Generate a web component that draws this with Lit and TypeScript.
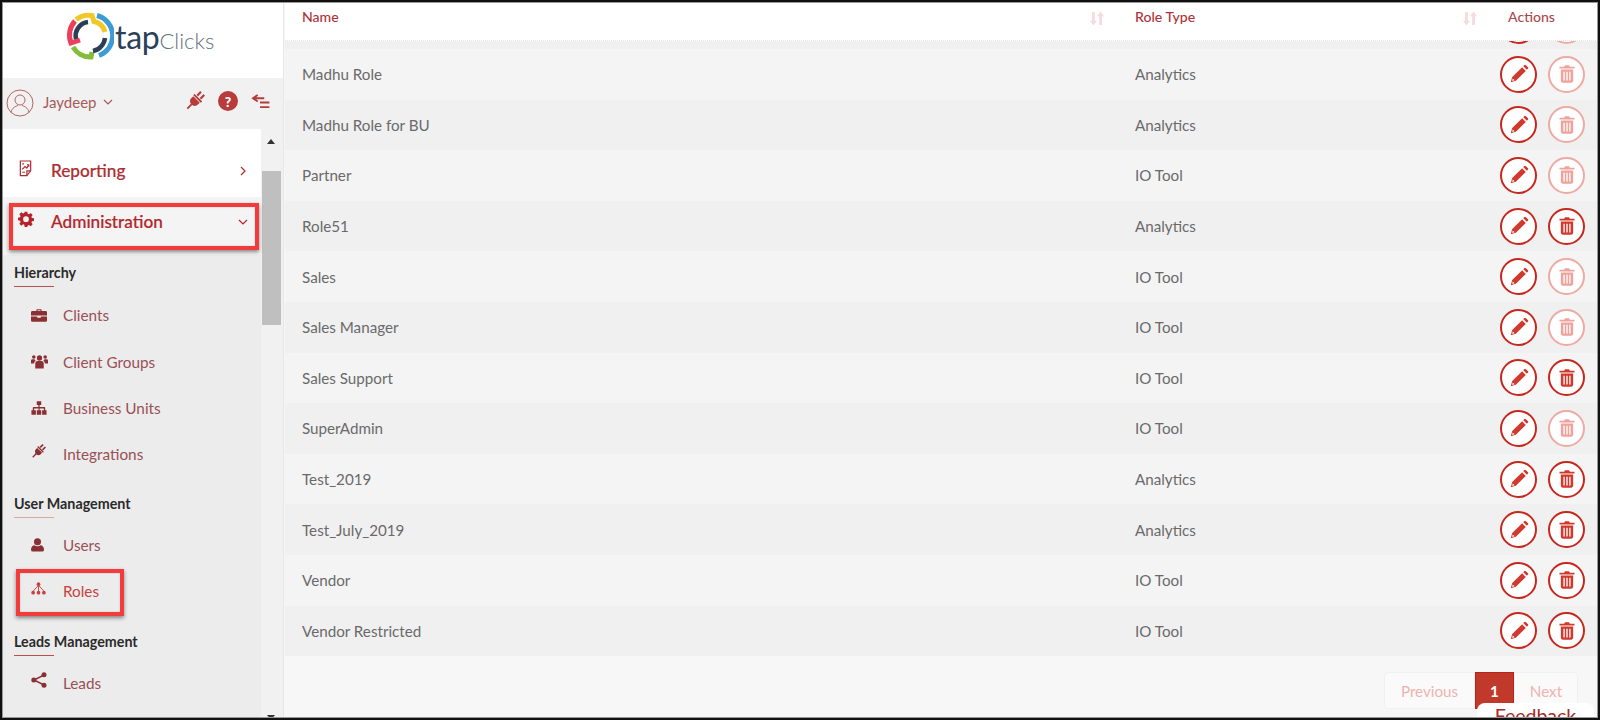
import { LitElement, html, css, svg } from "lit";
import { customElement } from "lit/decorators.js";

const pencil = svg`<svg viewBox="0 0 24 24" width="22" height="22" class="ic"><path d="M3 21l1.600-5.600L15.400 4.600l4 4L8.600 19.400z"/><path d="M16.600 3.400l1-1a1.400 1.400 0 0 1 2 0l2 2a1.400 1.400 0 0 1 0 2l-1 1z"/><path d="M5.100 16.800l2.100 2.100-2.600.6z" fill="#fff"/></svg>`;
const trash = svg`<svg viewBox="0 0 24 24" width="20" height="20" class="ic"><path d="M8.500 3.400 9.600 1.600h4.800l1.100 1.800H21v2H3v-2z"/><path fill-rule="evenodd" d="M4.600 6.600h14.800v13.600a2.200 2.200 0 0 1-2.200 2.200H6.800a2.200 2.200 0 0 1-2.200-2.200zM7.700 9.200v10.600h1.600V9.200zm3.500 0v10.600h1.600V9.200zm3.500 0v10.600h1.600V9.200z"/></svg>`;
const sortI = svg`<svg viewBox="0 0 16 16" width="14" height="15" preserveAspectRatio="none" class="sort"><path d="M2.300 1h3.200v9.500H8L3.900 15.500 0 10.500h2.300zM10.500 5.500H8L12 .5l4 5h-2.300V15h-3.200z"/></svg>`;
const gear = svg`<svg viewBox="0 0 24 24" width="16" height="16" fill="currentColor"><path fill-rule="evenodd" d="M10 1h4l.6 3.100 1.800.8L19.100 3l2.900 2.900-1.900 2.700.8 1.800L24 11v4l-3.100.5-.8 1.800 1.900 2.700-2.900 2.900-2.700-1.900-1.800.8L14 24h-4l-.6-3.200-1.800-.8L4.900 22 2 19.100l1.900-2.700-.8-1.800L0 14v-4l3.100-.6.8-1.800L2 4.900 4.900 2l2.700 1.900 1.800-.8zM12 8a4.300 4.300 0 1 0 0 8.600A4.300 4.300 0 0 0 12 8z"/></svg>`;
const report = svg`<svg viewBox="0 0 16 18" width="15" height="17" fill="none" stroke="currentColor" stroke-width="1.300"><path d="M2.500 1h11v10.500L9.500 16.500h-7z"/><path d="M13.500 11.500h-4v5"/><path d="M4.500 10l3-3 2 1.500 2-3.500M9.500 5h2v2M4.500 4h2M4.500 13h3"/></svg>`;
const brief = svg`<svg viewBox="0 0 18 14" width="16" height="13" fill="currentColor"><path fill-rule="evenodd" d="M6 2V1a1 1 0 0 1 1-1h4a1 1 0 0 1 1 1v1h4.500A1.500 1.500 0 0 1 18 3.500V7H0V3.500A1.500 1.500 0 0 1 1.500 2zm1.300 0h3.400V1.200H7.300z"/><path d="M0 8h7v1.500h4V8h7v4.500a1.500 1.500 0 0 1-1.500 1.500h-15A1.500 1.500 0 0 1 0 12.500z"/></svg>`;
const users = svg`<svg viewBox="0 0 18 15" width="17" height="15" fill="currentColor"><circle cx="9" cy="3.800" r="2.800"/><circle cx="3" cy="2.800" r="1.900"/><circle cx="15" cy="2.800" r="1.900"/><path d="M4.500 9.500a2.500 2.500 0 0 1 2.500-2.500h4a2.500 2.500 0 0 1 2.500 2.500V15h-9zM0 6.500a1.500 1.500 0 0 1 1.500-1.500h2.300c.3 1 .8 1.500 1.200 1.700C4 7.200 3.400 8.200 3.400 9.500H0zM18 6.500A1.500 1.500 0 0 0 16.500 5h-2.300c-.3 1-.8 1.500-1.200 1.700 1 .5 1.600 1.500 1.600 2.800H18z"/></svg>`;
const sitemap = svg`<svg viewBox="0 0 18 15" width="16" height="14" fill="currentColor"><path d="M6.500 0h5v4H9.700v2.500H15a1 1 0 0 1 1 1V10h1.500v5h-5v-5h2V8H9.700v2h1.800v5h-5v-5h2V8H3.500v2h2v5H.5v-5H2V7.500a1 1 0 0 1 1-1h5.300V4H6.500z"/></svg>`;
const plug = svg`<svg viewBox="0 0 24 24" width="100%" height="100%" fill="currentColor"><g transform="rotate(45 12 12)"><rect x="8" y="-1" width="2.600" height="6.500" rx=".6"/><rect x="13.400" y="-1" width="2.600" height="6.500" rx=".6"/><rect x="5.500" y="6.300" width="13" height="2.200" rx=".6"/><path d="M6.500 9.400h11v3.100a5.500 5.500 0 0 1-4.400 5.400V25h-2.200v-7.100a5.500 5.500 0 0 1-4.400-5.400z"/></g></svg>`;
const person = svg`<svg viewBox="0 0 14 15" width="13" height="14" fill="currentColor"><circle cx="7" cy="4" r="3.800"/><path d="M0 12.500C0 9.500 2 7.800 3.500 7.800 4.500 8.500 5.600 8.900 7 8.900s2.500-.4 3.500-1.100C12 7.800 14 9.500 14 12.500a2 2 0 0 1-2 2H2a2 2 0 0 1-2-2z"/></svg>`;
const roleI = svg`<svg viewBox="0 0 16 14" width="15" height="13" fill="none" stroke="currentColor" stroke-width="1"><path d="M8 3v8M8 3.500 2.500 9.500v2M8 3.500l5.500 6v2"/><g fill="currentColor" stroke="none"><circle cx="8" cy="2.300" r="2"/><circle cx="2.200" cy="11.500" r="2"/><circle cx="8" cy="11.500" r="2"/><circle cx="13.800" cy="11.500" r="2"/></g></svg>`;
const share = svg`<svg viewBox="0 0 16 16" width="16" height="16" fill="currentColor" stroke="currentColor"><path d="M13 3 3 8l10 5" fill="none" stroke-width="1.400"/><g stroke="none"><circle cx="13" cy="2.800" r="2.500"/><circle cx="2.800" cy="8" r="2.500"/><circle cx="13" cy="13.200" r="2.500"/></g></svg>`;

const rows: [string, string, boolean][] = [
  ["Madhu Role", "Analytics", false],
  ["Madhu Role for BU", "Analytics", false],
  ["Partner", "IO Tool", false],
  ["Role51", "Analytics", true],
  ["Sales", "IO Tool", false],
  ["Sales Manager", "IO Tool", false],
  ["Sales Support", "IO Tool", true],
  ["SuperAdmin", "IO Tool", false],
  ["Test_2019", "Analytics", true],
  ["Test_July_2019", "Analytics", true],
  ["Vendor", "IO Tool", true],
  ["Vendor Restricted", "IO Tool", true],
];

@customElement("app-root")
export class AppRoot extends LitElement {
  static styles = css`
    :host { display: block; width: 1600px; height: 720px; position: relative; overflow: hidden; background: #f7f7f7;
      font-family: Lato, "Liberation Sans", sans-serif; color: #666; box-sizing: border-box; }
    * { box-sizing: border-box; }
    .frame { position: absolute; inset: 0; border: 2px solid #111; box-shadow: inset 0 0 0 1px #999; pointer-events: none; z-index: 5; }
    .shell { display: flex; height: 720px; padding: 3px 0 0 2px; }
    .side { width: 282px; flex: none; display: flex; flex-direction: column; background: #ececec; border-right: 1px solid #e6e6e6; }
    .logo { height: 75px; background: #fff; display: flex; align-items: flex-start; gap: 1px; padding: 9px 0 0 64px; }
    .logo-t { margin-top: 9px; line-height: 1; font-size: 22px; font-weight: 300; color: #5f7281; white-space: nowrap; }
    .logo-t b { font-size: 32px; font-weight: 400; color: #2a4158; letter-spacing: -0.3px; }
    .user { height: 51px; background: #f1f1f1; display: flex; align-items: center; padding: 0 13px 0 4px; color: #a85a5a; font-size: 15px; }
    .user > span, .chev { margin-bottom: 4px; }
    .avatar { width: 28px; height: 28px; margin: 0 9px 2px 0; }
    .chev { margin-left: 7px; }
    .tools { margin: 0 0 5px auto; display: flex; align-items: center; gap: 13px; color: #b83a3a; }
    .tools .pl { width: 20px; height: 20px; }
    .help { width: 20px; height: 20px; border-radius: 50%; background: #b83c3c; color: #fff; font-weight: 900; font-size: 14px; display: flex; align-items: center; justify-content: center; }
    .body { flex: 1; display: flex; min-height: 0; }
    .nav { width: 259px; flex: none; display: flex; flex-direction: column; }
    .top { height: 68px; background: #fff; display: flex; align-items: flex-end; padding: 0 15px 15px 16px; color: #ad2f33; }
    .admin { height: 58px; background: #f4f4f4; display: flex; align-items: flex-start; padding: 14px 13px 0 16px; color: #b5242a; }
    .top span, .admin span { font-size: 17.200px; font-weight: 500; margin-left: 17px; flex: 1; line-height: 22px; -webkit-text-stroke: 0.2px currentColor; }
    .top span { margin-left: 18px; }
    .top svg:first-child, .admin svg:first-child { flex: none; }
    .top svg:first-child { margin-bottom: 5px; }
    .tchev { margin-bottom: 6px; }
    .achev { margin-top: 8px; }
    .sub { flex: 1; padding: 6px 0 0 12px; }
    .sec { font-size: 14.300px; font-weight: 700; color: #2a2a2a; height: 25px; line-height: 24px; white-space: nowrap; }
    .rule { width: 40px; height: 1px; background: #b85050; margin-bottom: 5px; margin-left: 0; }
    .rule.l { background: #d9a5a5; margin-bottom: 4px; }
    .rule.t { margin-bottom: 3px; }
    .it { height: 46.400px; display: flex; align-items: center; color: #9a5055; font-size: 15.300px; padding-left: 16px; }
    .it .i { width: 33px; flex: none; display: flex; justify-content: flex-start; color: #8a2f33; padding-left: 1px; }
    .it .i.raise { margin-top: -6px; }
    .it.on, .it.on .i { color: #c8403f; }
    .it .pi { width: 15px; height: 15px; display: block; }
    .gap { height: 14px; }
    .gap2 { height: 16px; }
    .bar { width: 22px; flex: none; background: #f1f1f1; position: relative; }
    .thumb { position: absolute; left: 1px; right: 2px; top: 42px; height: 154px; background: #bfbfbf; }
    .up, .dn { position: absolute; left: 6px; width: 0; height: 0; border-left: 4px solid transparent; border-right: 4px solid transparent; }
    .up { top: 10px; border-bottom: 5px solid #333; }
    .dn { bottom: 0; border-top: 5px solid #333; }
    .main { flex: 1; min-width: 0; display: flex; flex-direction: column; background: #f7f7f7; padding-left: 1px; }
    .head, .row { display: grid; grid-template-columns: 833px 370px 1fr; padding-left: 17px; align-items: center; }
    .head { height: 38px; background: #fff; font-size: 14.100px; color: #ae3338; align-items: start; padding-top: 5px; border-bottom: 1px dotted #e6e6e6; position: relative; z-index: 1; }
    .hc { display: flex; justify-content: space-between; padding-right: 31px; font-weight: 500; }
    .hc.b { padding-right: 28px; }
    .hc.a { color: #a9494d; padding-left: 3px; }
    .sort { fill: #f5dcdc; margin-top: 3px; }
    .row { height: 50.600px; font-size: 15.200px; color: #6a6a6a; background: #f4f4f4; }
    .row:nth-child(even) { background: #f0f0f0; }
    .peek { height: 8px; overflow: hidden; background: #f0f0f0; align-items: start; }
    .peek .acts { margin-top: -34px; grid-column: 3; }
    .acts { display: flex; gap: 11px; margin-left: -5px; justify-content: flex-start; }
    .btn { width: 37px; height: 37px; border-radius: 50%; border: 2px solid #c6281d; background: #fff; display: flex; align-items: center; justify-content: center; fill: #d03a2e; }
    .btn.off { border-color: #eeaaa4; fill: #eea39c; }
    .pager { margin: 16px 22px 0 auto; height: 37px; display: flex; font-size: 15.200px; }
    .pg { border: 1px solid #f1f1f1; background: #fafafa; color: #eeb3ae; display: flex; align-items: center; justify-content: center; }
    .pg.p { width: 91px; border-radius: 4px 0 0 4px; }
    .pg.n { width: 64px; border-radius: 0 4px 4px 0; }
    .pg.c { width: 39px; background: #c0392b; color: #fff; border-color: #b8241a; font-weight: 700; }
    .fb { position: absolute; left: 1477px; top: 703px; width: 117px; height: 30px; padding-top: 2px; background: #fff; border-radius: 8px 8px 0 0; color: #a52a2a; font-size: 19.500px; text-align: center; line-height: 22px; z-index: 3; }
    .mark { position: absolute; border: 4px solid #f23c3c; box-shadow: 0 2px 4px rgba(0,0,0,.45), inset 0 0 2px rgba(0,0,0,.2); z-index: 4; pointer-events: none; }
    .m1 { left: 9px; top: 203px; width: 250px; height: 47px; }
    .m2 { left: 16px; top: 569px; width: 108px; height: 47px; }
  `;

  private logo() {
    return svg`<svg viewBox="0 0 48 48" width="48" height="48" fill="none" stroke-width="5">
      <path d="M31 3.500A21 21 0 0 1 33 43.500" stroke="#3a9bd6"/>
      <path d="M10 7.500A20 20 0 0 1 26 3.500L28 9.500A14.500 14.500 0 0 1 39 20" stroke="#f2c829"/>
      <path d="M9 9A21 21 0 0 0 5 31L14 28" stroke="#ee3e5c"/>
      <path d="M7 35A20 20 0 0 0 25 45L26 40" stroke="#84bd3a"/>
      <path d="M10 27A14 14 0 0 1 22 10" stroke="#2a3f55" stroke-width="4.500"/>
      <path d="M39 26A15 15 0 0 1 27 39" stroke="#2a3f55" stroke-width="4.500"/>
    </svg>`;
  }

  render() {
    return html`
      <div class="shell">
        <aside class="side">
          <div class="logo">${this.logo()}<span class="logo-t"><b>tap</b>Clicks</span></div>
          <div class="user">
            <svg class="avatar" viewBox="0 0 28 28" fill="none" stroke="#b56565" stroke-width="1"><circle cx="14" cy="14" r="13"/><circle cx="14" cy="11" r="5"/><path d="M5 23.500c1-5 5-6.500 7-7M23 23.500c-1-5-5-6.500-7-7"/></svg>
            <span>Jaydeep</span>
            <svg class="chev" viewBox="0 0 10 6" width="10" height="6" fill="none" stroke="#a85a5a" stroke-width="1.200"><path d="M1 1l4 4 4-4"/></svg>
            <div class="tools">
              <span class="pl">${plug}</span>
              <span class="help">?</span>
              <svg viewBox="0 0 20 16" width="19" height="15" fill="none" stroke="#b83a3a" stroke-width="2"><path d="M7 1 2 4.500 7 8M2 4.500h12M9.500 9h10M9.500 14h10"/></svg>
            </div>
          </div>
          <div class="body">
            <div class="nav">
              <div class="top">${report}<span>Reporting</span>
                <svg class="tchev" viewBox="0 0 6 10" width="6" height="10" fill="none" stroke="currentColor" stroke-width="1.200"><path d="M1 1l4 4-4 4"/></svg></div>
              <div class="admin">${gear}<span>Administration</span>
                <svg class="achev" viewBox="0 0 10 6" width="10" height="6" fill="none" stroke="currentColor" stroke-width="1.200"><path d="M1 1l4 4 4-4"/></svg></div>
              <div class="sub">
                <div class="sec">Hierarchy</div><div class="rule"></div>
                <div class="it"><span class="i">${brief}</span>Clients</div>
                <div class="it"><span class="i">${users}</span>Client Groups</div>
                <div class="it"><span class="i">${sitemap}</span>Business Units</div>
                <div class="it"><span class="i raise"><span class="pi">${plug}</span></span>Integrations</div>
                <div class="gap"></div>
                <div class="sec">User Management</div><div class="rule l"></div>
                <div class="it"><span class="i">${person}</span>Users</div>
                <div class="it on"><span class="i raise">${roleI}</span>Roles</div>
                <div class="gap2"></div>
                <div class="sec">Leads Management</div><div class="rule t"></div>
                <div class="it"><span class="i raise">${share}</span>Leads</div>
              </div>
            </div>
            <div class="bar"><i class="up"></i><div class="thumb"></div><i class="dn"></i></div>
          </div>
        </aside>
        <main class="main">
          <div class="head">
            <div class="hc"><span>Name</span>${sortI}</div>
            <div class="hc b"><span>Role Type</span>${sortI}</div>
            <div class="hc a"><span>Actions</span></div>
          </div>
          <div class="row peek"><div class="acts"><span class="btn">${pencil}</span><span class="btn off">${trash}</span></div></div>
          <div>
            ${rows.map(([n, t, on]) => html`<div class="row"><span>${n}</span><span>${t}</span>
              <div class="acts"><span class="btn">${pencil}</span><span class="btn ${on ? "" : "off"}">${trash}</span></div></div>`)}
          </div>
          <div class="pager"><span class="pg p">Previous</span><span class="pg c">1</span><span class="pg n">Next</span></div>
        </main>
      </div>
      <div class="fb">Feedback</div>
      <div class="mark m1"></div>
      <div class="mark m2"></div>
      <div class="frame"></div>
    `;
  }
}
